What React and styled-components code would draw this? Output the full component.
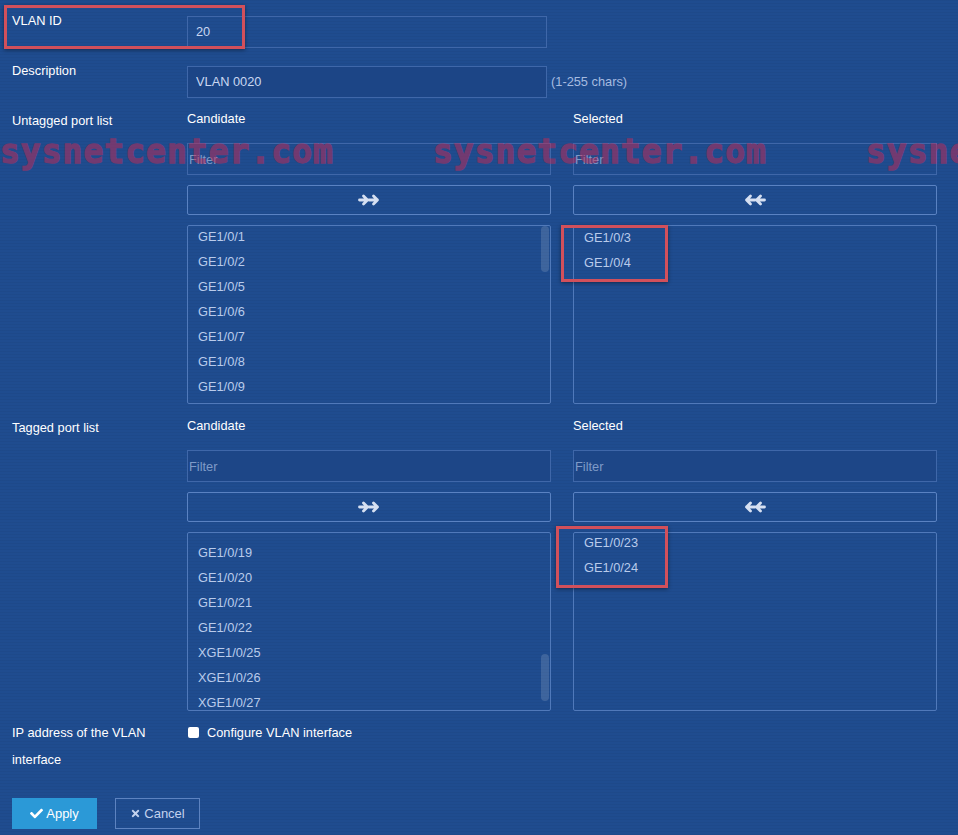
import React from "react";
import styled, { createGlobalStyle } from "styled-components";
import { FaCheck, FaTimes } from "react-icons/fa";

const GlobalStyle = createGlobalStyle`
  html, body {
    margin: 0;
    padding: 0;
    background: #1f4c8f;
  }
  body {
    font-family: "Liberation Sans", Arial, sans-serif;
  }
`;

const Page = styled.div`
  position: relative;
  width: 958px;
  height: 835px;
  overflow: hidden;
  box-sizing: border-box;
  padding: 11px 12px 0;
  background-color: #1f4c8f;
  background-image: repeating-linear-gradient(
    to bottom,
    rgba(0, 0, 0, 0.035) 0 1px,
    transparent 1px 3px
  );
  font-size: 12.8px;
  color: #ffffff;
`;

const Row = styled.div`
  display: grid;
  grid-template-columns: 175px 364px 22px 364px;
  margin-top: ${(p) => p.$gap || 0}px;
`;

const Label = styled.div`
  line-height: ${(p) => p.$lh || 20}px;
  padding-top: ${(p) => p.$pt || 0}px;
  color: #ffffff;
`;

const Field = styled.div`
  grid-column: 2 / 5;
  display: flex;
  align-items: center;
  gap: 4px;
  margin-top: ${(p) => p.$mt || 0}px;
`;

const TextInput = styled.input`
  box-sizing: border-box;
  width: 360px;
  height: 32px;
  margin: 0;
  padding: 0 8px 2px;
  border: 1px solid #3f67a9;
  background: ${(p) => (p.$filled ? "#1c4586" : "transparent")};
  color: #c9d7f1;
  font: 12.8px "Liberation Sans", Arial, sans-serif;
  outline: none;
`;

const Hint = styled.span`
  color: #a6bbe0;
  padding-bottom: 2px;
`;

const Column = styled.div`
  grid-column: ${(p) => p.$col};
  display: flex;
  flex-direction: column;
`;

const ColTitle = styled.div`
  line-height: 20px;
  margin-bottom: 14px;
`;

const Filter = styled.input`
  box-sizing: border-box;
  width: 100%;
  height: 32px;
  margin: 0;
  padding: 0 1px;
  border: 1px solid #3f67a9;
  background: ${(p) => (p.$filled ? "#1d4687" : "transparent")};
  color: #c9d7f1;
  font: 12.8px "Liberation Sans", Arial, sans-serif;
  outline: none;
  &::placeholder {
    color: #7f9bc8;
  }
`;

const MoveButton = styled.button`
  box-sizing: border-box;
  height: 30px;
  margin-top: 10px;
  padding: 0;
  border: 1px solid #5a82c2;
  border-radius: 2px;
  background: transparent;
  display: flex;
  align-items: center;
  justify-content: center;
  cursor: pointer;
`;

const ListBox = styled.div`
  position: relative;
  box-sizing: border-box;
  height: 179px;
  margin-top: 10px;
  border: 1px solid #5079ba;
  border-radius: 2px;
  overflow: hidden;
`;

const Items = styled.div`
  margin-top: ${(p) => p.$offset || 0}px;
`;

const Item = styled.div`
  line-height: 25px;
  padding-left: 10px;
  color: #b9cbeb;
  white-space: nowrap;
`;

const Thumb = styled.div`
  position: absolute;
  right: 1px;
  width: 8px;
  border-radius: 4px;
  background: rgba(255, 255, 255, 0.14);
`;

const CheckField = styled.label`
  grid-column: 2 / 5;
  display: flex;
  align-items: center;
  align-self: start;
  gap: 8px;
  height: 27px;
  color: #ffffff;
`;

const Check = styled.input`
  appearance: none;
  margin: 0 0 0 1px;
  width: 11px;
  height: 11px;
  border-radius: 2px;
  background: #ffffff;
  border: none;
`;

const Actions = styled.div`
  display: flex;
  gap: 18px;
  margin-top: 25px;
`;

const ActionButton = styled.button`
  box-sizing: border-box;
  width: 85px;
  height: 31px;
  display: flex;
  align-items: center;
  justify-content: center;
  gap: 3px;
  font: 13px "Liberation Sans", Arial, sans-serif;
  border-radius: 0;
  cursor: pointer;
  border: 1px solid ${(p) => (p.$primary ? "#2b99d7" : "#5d83c0")};
  background: ${(p) => (p.$primary ? "#2b99d7" : "transparent")};
  color: ${(p) => (p.$primary ? "#ffffff" : "#c3d2ee")};
  svg {
    font-size: ${(p) => (p.$primary ? 13 : 11)}px;
  }
`;

const Watermark = styled.div`
  position: absolute;
  top: 135px;
  left: ${(p) => p.$x}px;
  font-family: "DejaVu Sans Mono", monospace;
  font-weight: bold;
  font-size: 33px;
  line-height: 33px;
  letter-spacing: 1px;
  color: #c42a55;
  -webkit-text-stroke: 1.3px #c42a55;
  opacity: 0.5;
  white-space: nowrap;
  pointer-events: none;
`;

const Mark = styled.div`
  position: absolute;
  left: ${(p) => p.$x}px;
  top: ${(p) => p.$y}px;
  width: ${(p) => p.$w}px;
  height: ${(p) => p.$h}px;
  box-sizing: border-box;
  border: 3px solid #d2505b;
  box-shadow: 0 1px 4px rgba(0, 0, 0, 0.45);
  pointer-events: none;
`;

const Arrows = ({ left }) => (
  <svg
    width="22"
    height="12"
    viewBox="0 0 22 12"
    style={left ? { transform: "scaleX(-1)" } : undefined}
  >
    <g
      fill="none"
      stroke="#d6e0f2"
      strokeWidth="2.8"
      strokeLinecap="round"
      strokeLinejoin="round"
    >
      <path d="M1.5 6 H9 M5.5 2 L9.5 6 L5.5 10" />
      <path d="M11 6 H19.5 M15.5 2 L19.5 6 L15.5 10" />
    </g>
  </svg>
);

const PortRow = ({ gap, title, candidate, selected, offset, selOffset, thumb, filled }) => (
  <Row $gap={gap}>
    <Label $pt={2}>{title}</Label>
    <Column $col={2}>
      <ColTitle>Candidate</ColTitle>
      <Filter placeholder="Filter" $filled={filled} />
      <MoveButton>
        <Arrows />
      </MoveButton>
      <ListBox>
        <Items $offset={offset}>
          {candidate.map((p) => (
            <Item key={p}>{p}</Item>
          ))}
        </Items>
        <Thumb style={{ top: thumb.top, height: thumb.height }} />
      </ListBox>
    </Column>
    <Column $col={4}>
      <ColTitle>Selected</ColTitle>
      <Filter placeholder="Filter" $filled={filled} />
      <MoveButton>
        <Arrows left />
      </MoveButton>
      <ListBox>
        <Items $offset={selOffset}>
          {selected.map((p) => (
            <Item key={p}>{p}</Item>
          ))}
        </Items>
      </ListBox>
    </Column>
  </Row>
);

export default function App() {
  return (
    <Page>
      <GlobalStyle />
      <Row>
        <Label>VLAN ID</Label>
        <Field $mt={5}>
          <TextInput defaultValue="20" />
        </Field>
      </Row>
      <Row $gap={13}>
        <Label>Description</Label>
        <Field $mt={5}>
          <TextInput defaultValue="VLAN 0020" $filled />
          <Hint>(1-255 chars)</Hint>
        </Field>
      </Row>
      <PortRow
        gap={11}
        title="Untagged port list"
        candidate={["GE1/0/1", "GE1/0/2", "GE1/0/5", "GE1/0/6", "GE1/0/7", "GE1/0/8", "GE1/0/9"]}
        selected={["GE1/0/3", "GE1/0/4"]}
        offset={-2}
        selOffset={-1}
        thumb={{ top: 0, height: 46 }}
      />
      <PortRow
        gap={12}
        title="Tagged port list"
        candidate={["GE1/0/19", "GE1/0/20", "GE1/0/21", "GE1/0/22", "XGE1/0/25", "XGE1/0/26", "XGE1/0/27"]}
        selected={["GE1/0/23", "GE1/0/24"]}
        offset={7}
        selOffset={-3}
        thumb={{ top: 121, height: 47 }}
        filled
      />
      <Row $gap={8}>
        <Label $lh={27}>
          IP address of the VLAN
          <br />
          interface
        </Label>
        <CheckField>
          <Check type="checkbox" />
          Configure VLAN interface
        </CheckField>
      </Row>
      <Actions>
        <ActionButton $primary>
          <FaCheck />
          Apply
        </ActionButton>
        <ActionButton>
          <FaTimes />
          Cancel
        </ActionButton>
      </Actions>

      <Watermark $x={0}>sysnetcenter.com</Watermark>
      <Watermark $x={433}>sysnetcenter.com</Watermark>
      <Watermark $x={866}>sysnetcenter.com</Watermark>

      <Mark $x={4} $y={5} $w={241} $h={44} />
      <Mark $x={561} $y={225} $w={107} $h={57} />
      <Mark $x={556} $y={526} $w={112} $h={62} />
    </Page>
  );
}
